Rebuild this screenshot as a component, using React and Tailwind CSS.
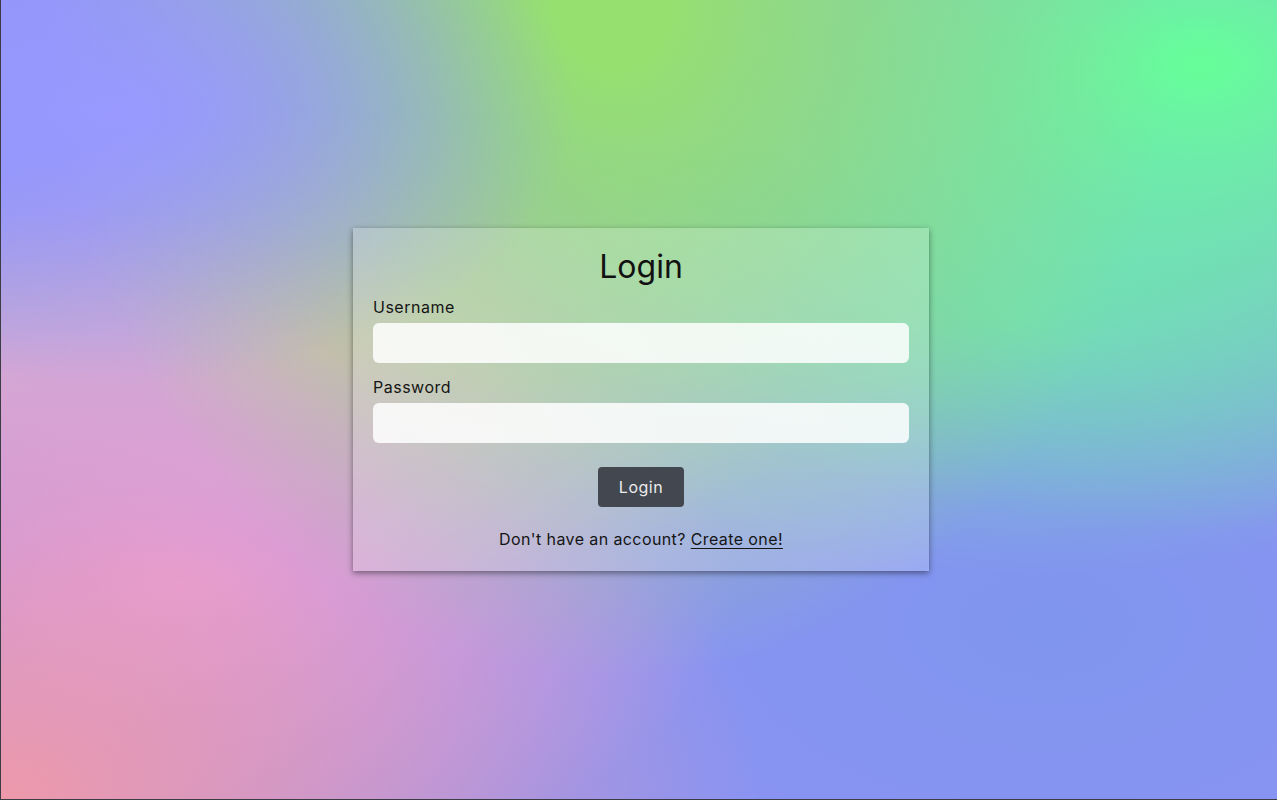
import React from "react";

// Mesh-style background built from stacked radial gradients
const MESH =
  "bg-[#8f93f4] bg-[radial-gradient(at_9%_14%,#9999ff_0px,transparent_28%),radial-gradient(at_48%_0%,#96e070_0px,#96e070_6%,transparent_60%),radial-gradient(at_94%_8%,#66ff99_0px,transparent_45%),radial-gradient(at_80%_40%,#7ac8c8_0px,transparent_38%),radial-gradient(at_0%_100%,#ee99aa_0px,transparent_42%),radial-gradient(at_14%_73%,#e2a0ea_0px,transparent_36%),radial-gradient(at_0%_48%,#ccaad4_0px,transparent_30%),radial-gradient(at_25%_44%,#d8b8b0_0px,transparent_38%),radial-gradient(at_82%_78%,#7f95ee_0px,transparent_45%)]";

function Field({ label, type, className }) {
  return (
    <div className={className}>
      <label className="block text-base leading-6 tracking-[0.5px] text-[#151515]">
        {label}
      </label>
      <input
        type={type}
        className="mt-1 block h-10 w-full rounded-md bg-white/85 px-3 text-base outline-none"
      />
    </div>
  );
}

export default function App() {
  return (
    <div
      className={`flex h-[800px] w-full items-center justify-center border-b border-l border-[#3c3c44] pl-1 ${MESH}`}
      style={{ fontFamily: "Inter, 'Noto Sans', sans-serif" }}
    >
      <form
        className="w-[576px] bg-white/20 px-5 pt-5 pb-5 shadow-[0_2px_6px_rgba(0,0,0,0.45)]"
        onSubmit={(e) => e.preventDefault()}
      >
        <h1 className="mb-[9px] text-center text-[32px] leading-[38px] font-normal text-[#111]">
          Login
        </h1>
        <Field label="Username" type="text" />
        <Field label="Password" type="password" className="mt-3" />
        <div className="mt-6 flex justify-center">
          <button
            type="submit"
            className="h-10 rounded-sm bg-[#434850] px-[21px] text-base tracking-[0.5px] text-[#ececec]"
          >
            Login
          </button>
        </div>
        <p className="mt-5 text-center text-base leading-6 tracking-[0.4px] text-[#151515]">
          Don't have an account?{" "}
          <a href="#" className="underline underline-offset-[3px]">
            Create one!
          </a>
        </p>
      </form>
    </div>
  );
}
